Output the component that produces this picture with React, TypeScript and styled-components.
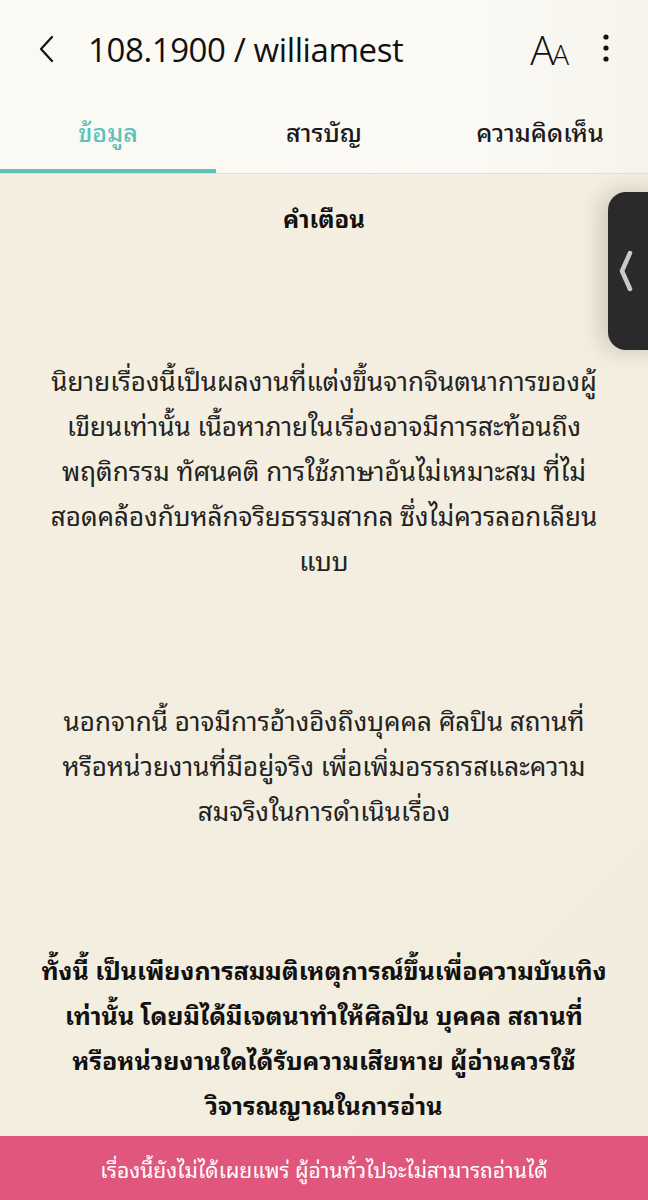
import React from 'react';
import styled, { createGlobalStyle } from 'styled-components';

const GlobalStyle = createGlobalStyle`
    html, body {
        margin: 0;
        padding: 0;
        background: #f3eedf;
    }
    body {
        font-family: "Noto Sans Thai Looped", "Noto Sans Thai", "Noto Sans", "Open Sans", sans-serif;
        color: #111;
    }
`;

const Page = styled.div`
    position: relative;
    width: 648px;
    height: 1200px;
    display: flex;
    flex-direction: column;
    overflow: hidden;
    background: linear-gradient(135deg, #f4efe0 0%, #f3eedf 60%, #f1ecdc 100%);
`;

const Header = styled.header`
    background: linear-gradient(90deg, #fbf9f3 0%, #fbfaf6 70%, #f7f4ec 100%);
    border-bottom: 1px solid #e4dfd2;
`;

const TitleBar = styled.div`
    height: 98px;
    display: flex;
    align-items: center;
    padding: 0 37px 0 36px;
`;

const IconButton = styled.button`
    border: 0;
    background: none;
    padding: 0;
    display: flex;
    align-items: center;
    justify-content: center;
    color: #111;
`;

const Title = styled.h1`
    flex: 1;
    margin: 0 0 0 30px;
    font-family: "Open Sans", "Noto Sans", sans-serif;
    font-size: 33px;
    font-weight: 500;
    letter-spacing: -0.4px;
`;

const FontSize = styled.span`
    font-family: "Open Sans", "Noto Sans", sans-serif;
    font-size: 40px;
    font-weight: 300;
    margin-right: 34px;
    letter-spacing: -2px;

    small {
        font-size: 28px;
    }
`;

const Tabs = styled.nav`
    display: grid;
    grid-template-columns: repeat(3, 1fr);
    height: 75px;
`;

const Tab = styled.div<{ $active?: boolean }>`
    display: flex;
    align-items: center;
    justify-content: center;
    padding-bottom: 5px;
    font-size: 25px;
    font-weight: 500;
    color: ${props => (props.$active ? '#5cc2bc' : '#1a1a1a')};
    border-bottom: 4px solid ${props => (props.$active ? '#5cc2bc' : 'transparent')};
`;

const Body = styled.main`
    flex: 1;
    min-height: 0;
    overflow: hidden;
    padding: 21px 16px 0;
    text-align: center;
`;

const Heading = styled.h2`
    margin: 0 0 117px;
    font-size: 24px;
    font-weight: 700;
    line-height: 45px;
`;

const Paragraph = styled.p<{ $bold?: boolean }>`
    margin: 0 0 115px;
    font-size: ${props => (props.$bold ? '25px' : '26px')};
    line-height: 45px;
    font-weight: ${props => (props.$bold ? 700 : 400)};
    color: ${props => (props.$bold ? '#111' : '#222')};

    &:last-child {
        margin-bottom: 0;
    }
`;

const SideHandle = styled.div`
    position: absolute;
    top: 192px;
    right: -20px;
    width: 60px;
    height: 158px;
    border-radius: 18px;
    background: #2a2a2a;
    display: flex;
    align-items: center;
    padding-left: 10px;
    box-sizing: border-box;
    box-shadow: -6px 0 24px rgba(0, 0, 0, 0.18);
`;

const Notice = styled.footer`
    flex-shrink: 0;
    height: 64px;
    background: #e0567c;
    color: #fff;
    display: flex;
    align-items: center;
    justify-content: center;
    font-size: 21px;
`;

const lines = (text: string[]) =>
    text.map((line, i) => (
        <React.Fragment key={i}>
            {line}
            {i < text.length - 1 ? <br /> : null}
        </React.Fragment>
    ));

export default function App() {
    return (
        <>
            <GlobalStyle />
            <Page>
                <Header>
                    <TitleBar>
                        <IconButton aria-label="back">
                            <svg width="22" height="30" viewBox="0 0 22 30" fill="none">
                                <path d="M16 3 L5 15 L16 27" stroke="#111" strokeWidth="2.2" strokeLinecap="round" strokeLinejoin="round" />
                            </svg>
                        </IconButton>
                        <Title>108.1900 / williamest</Title>
                        <FontSize>
                            A<small>A</small>
                        </FontSize>
                        <IconButton aria-label="more">
                            <svg width="10" height="34" viewBox="0 0 10 34">
                                <circle cx="5" cy="5" r="2.6" fill="#111" />
                                <circle cx="5" cy="16" r="2.6" fill="#111" />
                                <circle cx="5" cy="27" r="2.6" fill="#111" />
                            </svg>
                        </IconButton>
                    </TitleBar>
                    <Tabs>
                        <Tab $active>ข้อมูล</Tab>
                        <Tab>สารบัญ</Tab>
                        <Tab>ความคิดเห็น</Tab>
                    </Tabs>
                </Header>
                <Body>
                    <Heading>คำเตือน</Heading>
                    <Paragraph>
                        {lines([
                            'นิยายเรื่องนี้เป็นผลงานที่แต่งขึ้นจากจินตนาการของผู้',
                            'เขียนเท่านั้น เนื้อหาภายในเรื่องอาจมีการสะท้อนถึง',
                            'พฤติกรรม ทัศนคติ การใช้ภาษาอันไม่เหมาะสม ที่ไม่',
                            'สอดคล้องกับหลักจริยธรรมสากล ซึ่งไม่ควรลอกเลียน',
                            'แบบ',
                        ])}
                    </Paragraph>
                    <Paragraph>
                        {lines([
                            'นอกจากนี้ อาจมีการอ้างอิงถึงบุคคล ศิลปิน สถานที่',
                            'หรือหน่วยงานที่มีอยู่จริง เพื่อเพิ่มอรรถรสและความ',
                            'สมจริงในการดำเนินเรื่อง',
                        ])}
                    </Paragraph>
                    <Paragraph $bold>
                        {lines([
                            'ทั้งนี้ เป็นเพียงการสมมติเหตุการณ์ขึ้นเพื่อความบันเทิง',
                            'เท่านั้น โดยมิได้มีเจตนาทำให้ศิลปิน บุคคล สถานที่',
                            'หรือหน่วยงานใดได้รับความเสียหาย ผู้อ่านควรใช้',
                            'วิจารณญาณในการอ่าน',
                        ])}
                    </Paragraph>
                </Body>
                <SideHandle>
                    <svg width="16" height="44" viewBox="0 0 16 44" fill="none">
                        <path d="M12 4 L4 22 L12 40" stroke="#c9c9cd" strokeWidth="4.5" strokeLinecap="round" strokeLinejoin="round" />
                    </svg>
                </SideHandle>
                <Notice>เรื่องนี้ยังไม่ได้เผยแพร่ ผู้อ่านทั่วไปจะไม่สามารถอ่านได้</Notice>
            </Page>
        </>
    );
}
